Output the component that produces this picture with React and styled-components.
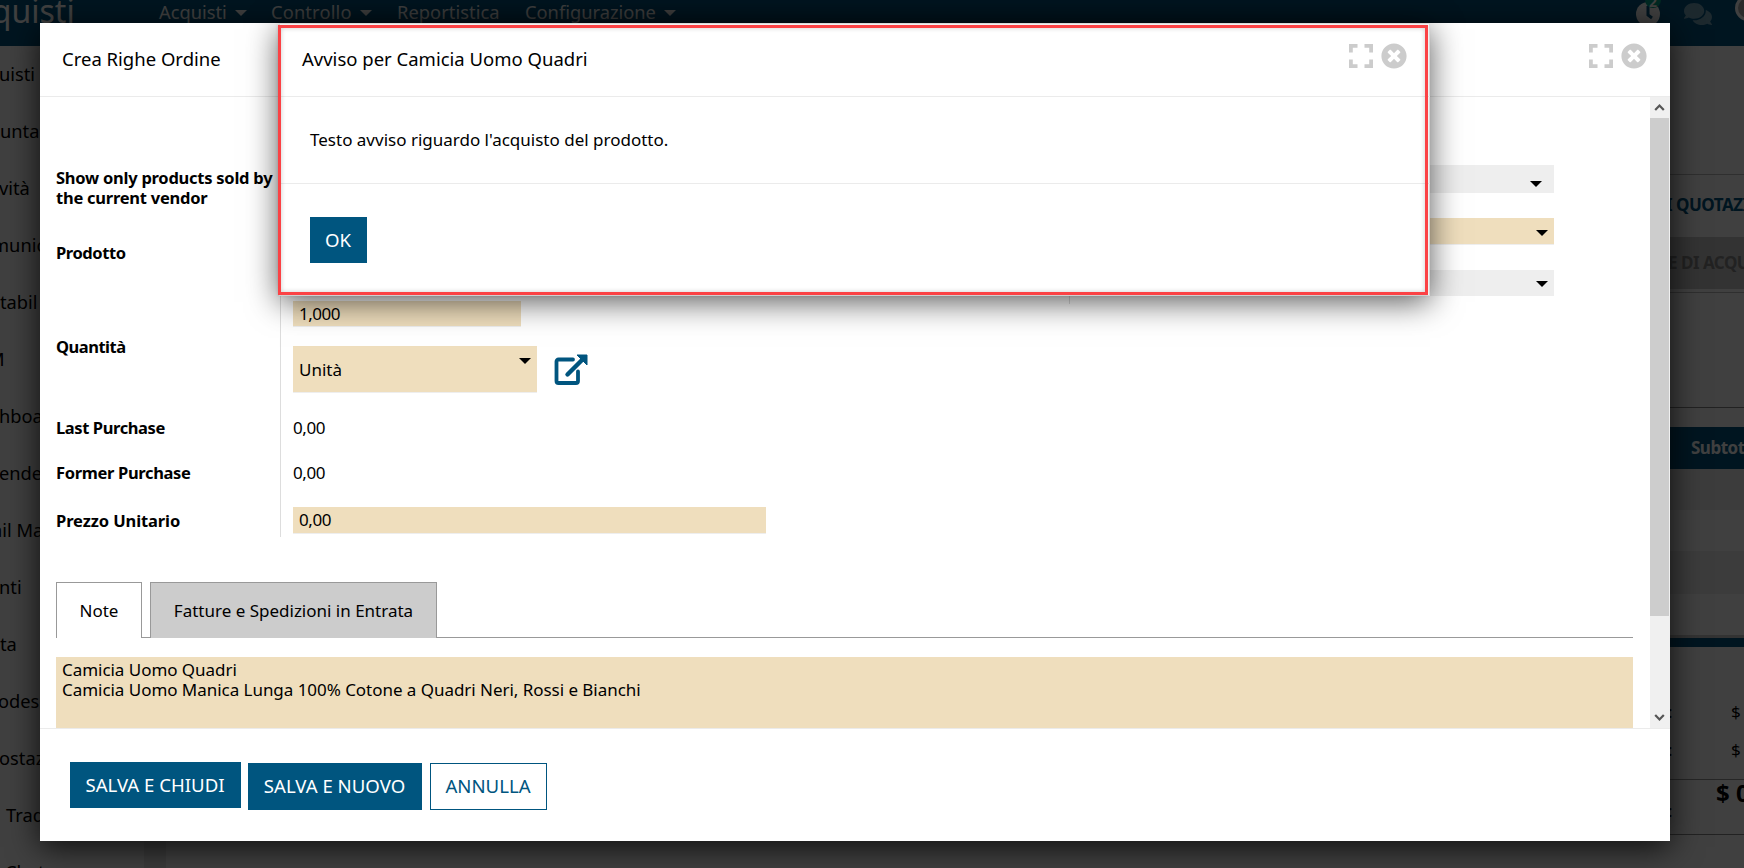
import React from 'react';
import styled, { createGlobalStyle, css } from 'styled-components';
import { FaComments, FaTimesCircle } from 'react-icons/fa';

const BLUE = '#00557f';
const SAND = '#efdebd';

const GlobalStyle = createGlobalStyle`
  *, *::before, *::after { box-sizing: border-box; }
  body {
    margin: 0;
    background: #fff;
    color: #000;
    font-family: "Noto Sans", "Open Sans", sans-serif;
    font-size: 17px;
    line-height: 20px;
  }
`;

const Screen = styled.div`
  position: relative;
  width: 1744px;
  height: 868px;
  overflow: hidden;
  white-space: nowrap;
`;

/* ---------- page behind the dialogs ---------- */

const TopBar = styled.header`
  display: flex;
  height: 46px;
  background: ${BLUE};
  color: #fff;
  font-size: 18.3px;
  line-height: 24px;
`;

const Brand = styled.div`
  width: 166px;
  margin-left: -7px;
  flex: none;
  font-size: 32px;
  line-height: 40px;
  margin-top: -9px;
  text-indent: -37px;
`;

const Menu = styled.nav`
  display: flex;
  flex: 1;
`;

const MenuItem = styled.span`
  display: flex;
  align-items: flex-start;
  width: ${(p) => p.$width}px;
  letter-spacing: ${(p) => p.$ls || 0}px;
`;

const Caret = styled.span`
  flex: none;
  width: 0;
  height: 0;
  border: 6px solid transparent;
  border-top-color: currentColor;
  border-bottom: 0;
`;

const MenuCaret = styled(Caret)`
  margin: 10px 0 0 8px;
`;

const Tray = styled.div`
  display: flex;
  width: 108px;
  flex: none;
`;

const ClockHolder = styled.div`
  position: relative;
  width: 24px;
  margin: 2px 24px 0 0;
  svg { display: block; }
`;

const Badge = styled.span`
  position: absolute;
  left: 9px;
  top: -11px;
  width: 16px;
  height: 17px;
  border-radius: 8px;
  background: #00a287;
  font-size: 14px;
  font-weight: 700;
  line-height: 22px;
  text-align: center;
`;

const Chat = styled(FaComments)`
  flex: none;
  width: 28px;
  height: 26px;
  margin: 1px 23px 0 0;
  opacity: 0.45;
`;

const Avatar = styled.span`
  flex: none;
  width: 26px;
  height: 26px;
  margin-top: -5px;
  border: 3px solid #fff;
  border-radius: 50%;
  background: #aaa;
`;

const Page = styled.div`
  display: flex;
  height: 822px;
`;

const SideBar = styled.aside`
  width: 144px;
  padding-top: 16px;
  font-size: 18.3px;
`;

const SideItem = styled.div`
  height: 57px;
  line-height: 24px;
  text-indent: ${(p) => p.$x}px;
`;

const Gutter = styled.div`
  width: 22px;
  background: #eaeaea;
`;

const Record = styled.main`
  flex: 1;
  display: flex;
  flex-direction: column;
  align-items: flex-end;
`;

const RecordRow = styled.div`
  display: flex;
  align-items: flex-start;
  width: 84px;
  flex: none;
  height: ${(p) => p.$h}px;
  padding-top: ${(p) => p.$top || 0}px;
  padding-left: ${(p) => p.$left || 0}px;
  background: ${(p) => p.$bg || 'transparent'};
  color: ${(p) => p.$color || '#000'};
  border-bottom: ${(p) => (p.$line ? `1px solid ${p.$line}` : '0')};
  font-weight: ${(p) => (p.$bold ? 700 : 400)};
  letter-spacing: ${(p) => (p.$bold ? -0.5 : 0)}px;
`;

const Amount = styled.span`
  margin-left: auto;
  width: ${(p) => p.$width}px;
  font-size: ${(p) => (p.$total ? 24 : 17)}px;
  font-weight: ${(p) => (p.$total ? 700 : 400)};
`;

const TotalColon = styled.span`
  margin-top: 18px;
`;

const Backdrop = styled.div`
  position: absolute;
  inset: 0;
  background: rgba(0, 0, 0, 0.75);
`;

/* ---------- dialogs ---------- */

const dialogBox = css`
  position: absolute;
  display: flex;
  flex-direction: column;
  background: #fff;
`;

const OrderDialog = styled.section`
  ${dialogBox}
  left: 40px;
  top: 23px;
  width: 1630px;
  height: 818px;
  box-shadow: 0 6px 30px rgba(0, 0, 0, 0.8);
`;

const AlertDialog = styled.section`
  ${dialogBox}
  left: 279px;
  top: 23px;
  width: 1151px;
  height: 273px;
  box-shadow: 0 6px 30px rgba(0, 0, 0, 0.65), inset 0 0 0 1px #ddd;

  &::after {
    content: '';
    position: absolute;
    left: -1px;
    top: 2px;
    width: 1150px;
    height: 270px;
    border: 3px solid #fb4245;
    box-shadow: inset 0 0 5px rgba(0, 0, 0, 0.2), 0 0 3px rgba(0, 0, 0, 0.15);
  }
`;

const DialogHeader = styled.header`
  display: flex;
  flex: none;
  height: 74px;
  padding: 20px 23px 0 ${(p) => p.$left}px;
  border-bottom: 1px solid #ebebeb;
  color: #ccc;
`;

const DialogTitle = styled.h1`
  flex: 1;
  margin: 4px 0 0;
  color: #000;
  font-size: 18.5px;
  font-weight: 400;
  line-height: 24px;
`;

const CloseIcon = styled(FaTimesCircle)`
  width: 26px;
  height: 26px;
  margin-left: 8px;
`;

const ExpandSvg = styled.svg`
  width: 24px;
  height: 24px;
  margin-top: 1px;
`;

const DialogMain = styled.div`
  display: flex;
  flex: none;
  height: 631px;
`;

const Scrolled = styled.div`
  width: 1593px;
  flex: none;
  height: 631px;
  padding: 60px 0 0 16px;
  overflow: hidden;
`;

const ScrollTrack = styled.div`
  width: 20px;
  margin-left: auto;
  padding-right: 1px;
  display: flex;
  flex-direction: column;
  background: #f0f0f0;
`;

const ScrollThumb = styled.div`
  height: 498px;
  margin-bottom: auto;
  background: #cdcdcd;
`;

const ScrollArrow = styled.svg`
  width: 19px;
  height: 21px;
  flex: none;
`;

const FormColumns = styled.div`
  display: flex;
  align-items: flex-start;
  height: 380px;
`;

const FormColumn = styled.div`
  width: 1013px;
  flex: none;
`;

const FieldRow = styled.div`
  display: flex;
  height: ${(p) => p.$h}px;
`;

const FieldLabel = styled.label`
  display: flex;
  align-items: center;
  width: 224px;
  flex: none;
  padding-top: ${(p) => p.$top || 0}px;
  font-size: 16.5px;
  font-weight: 700;
  letter-spacing: ${(p) => (p.$ls === undefined ? -0.25 : p.$ls)}px;
`;

const FieldCell = styled.div`
  display: flex;
  flex-direction: column;
  justify-content: ${(p) => (p.$stack ? 'flex-start' : 'center')};
  gap: 19px;
  padding: ${(p) => p.$top || 0}px 0 0 12px;
  border-left: 1px solid #ddd;
`;

const Value = styled.span`
  letter-spacing: -0.4px;
`;

const Field = styled.div`
  display: flex;
  align-items: center;
  width: ${(p) => p.$w}px;
  height: ${(p) => p.$h}px;
  padding-left: 6px;
  background: ${SAND};
  border-bottom: 1px solid #eee;
  letter-spacing: ${(p) => p.$ls || 0}px;
`;

const UnitLine = styled.div`
  display: flex;
`;

const UnitText = styled.span`
  padding-top: 1px;
`;

const UnitCaret = styled(Caret)`
  align-self: flex-start;
  margin: 12px 6px 0 auto;
`;

const LinkIcon = styled.svg`
  width: 34px;
  height: 32px;
  margin: 8px 0 0 17px;
`;

const SelectColumn = styled.div`
  display: flex;
  flex-direction: column;
  flex: none;
  gap: 25px;
  width: 485px;
  height: 147px;
  padding: 8px 0 0 12px;
  border-left: 1px solid #ddd;
`;

const SelectBox = styled.div`
  display: flex;
  flex: none;
  justify-content: flex-end;
  height: ${(p) => p.$h}px;
  padding: ${(p) => p.$top}px ${(p) => p.$right}px 0 0;
  background: ${(p) => (p.$required ? SAND : '#eee')};
  border-bottom: 1px solid #eee;
`;

const Tabs = styled.div`
  display: flex;
  gap: 8px;
  height: 56px;
  margin-top: 45px;
  border-bottom: 1px solid #999;
`;

const Tab = styled.div`
  display: flex;
  align-items: center;
  justify-content: center;
  width: ${(p) => p.$w}px;
  height: 56px;
  background: ${(p) => (p.$active ? '#fff' : '#ccc')};
  border: 1px solid #999;
  border-bottom: 0;
`;

const Notes = styled.div`
  height: 120px;
  margin-top: 19px;
  padding: 3px 6px;
  background: ${SAND};
  letter-spacing: -0.04px;
  white-space: pre-line;
`;

const DialogFooter = styled.footer`
  display: flex;
  flex: 1;
  align-items: flex-start;
  padding: 33px 0 0 30px;
  border-top: 1px solid #ebebeb;
`;

const Button = styled.button`
  width: ${(p) => p.$w}px;
  height: ${(p) => p.$h || 46}px;
  margin: ${(p) => p.$top || 0}px ${(p) => p.$gap || 0}px 0 0;
  padding: 0 1px ${(p) => (p.$h ? 1 : 0)}px 0;
  background: ${(p) => (p.$outline ? '#fff' : BLUE)};
  border: 1px solid ${BLUE};
  color: ${(p) => (p.$outline ? BLUE : '#fff')};
  font: 400 18.6px/24px "Noto Sans", sans-serif;
`;

const Message = styled.p`
  flex: none;
  height: 86px;
  margin: 0;
  padding: 33px 31px 0;
`;

const AlertFooter = styled(DialogFooter)`
  padding-left: 31px;
`;

function Expand() {
  return (
    <ExpandSvg viewBox="0 0 24 24" fill="none" stroke="currentColor" strokeWidth="3.8">
      <path d="M8.5 1.9H1.9v6.6M15.5 1.9h6.6v6.6M8.5 22.1H1.9v-6.6M15.5 22.1h6.6v-6.6" />
    </ExpandSvg>
  );
}

function Clock() {
  return (
    <svg width="24" height="24" viewBox="0 0 24 24">
      <circle cx="12" cy="12" r="12" fill="#fff" />
      <path d="M12 4v9l4 3" fill="none" stroke={BLUE} strokeWidth="3" />
    </svg>
  );
}

const sideItems = [
  ['uisti', -1], ['unta', 0], ['vità', -1], ['munic', -8], ['tabil', 0],
  ['M', -12], ['hboard', -1], ['ender', -1], ['ail Ma', -8], ['nti', -1],
  ['ta', 0], ['odesk', -2], ['ostaz', -1], ['Trad', 6], ['Chat', 5],
];

export default function App() {
  return (
    <Screen>
      <GlobalStyle />
      <TopBar>
        <Brand>Acquisti</Brand>
        <Menu>
          <MenuItem $width={112}>Acquisti<MenuCaret /></MenuItem>
          <MenuItem $width={126} $ls={0.15}>Controllo<MenuCaret /></MenuItem>
          <MenuItem $width={128} $ls={0.05}>Reportistica</MenuItem>
          <MenuItem $width={160}>Configurazione<MenuCaret /></MenuItem>
        </Menu>
        <Tray>
          <ClockHolder><Clock /><Badge>2</Badge></ClockHolder>
          <Chat />
          <Avatar />
        </Tray>
      </TopBar>
      <Page>
        <SideBar>
          {sideItems.map(([text, x]) => (
            <SideItem key={text} $x={x}>{text}</SideItem>
          ))}
        </SideBar>
        <Gutter />
        <Record>
          <RecordRow $h={129} $line="#bbb" />
          <RecordRow $h={62} $top={20} $left={6} $bold $color={BLUE}>I QUOTAZI</RecordRow>
          <RecordRow $h={52} $top={16} $left={8} $bold $bg="#ccc" $color="#888">E DI ACQU</RecordRow>
          <RecordRow $h={4} $line="#bbb" />
          <RecordRow $h={115} $line="#888" />
          <RecordRow $h={19} />
          <RecordRow $h={42} $top={11} $left={31} $bold $bg={BLUE} $color="#fff">Subtot</RecordRow>
          <RecordRow $h={41} $bg="#eee" />
          <RecordRow $h={41} />
          <RecordRow $h={43} $bg="#eee" />
          <RecordRow $h={41} />
          <RecordRow $h={3} $bg="#ccc" />
          <RecordRow $h={9} $bg={BLUE} />
          <RecordRow $h={93} $top={55} $left={8}>:<Amount $width={13}>$</Amount></RecordRow>
          <RecordRow $h={40} $line="#999" $left={8}>:<Amount $width={13}>$</Amount></RecordRow>
          <RecordRow $h={55} $top={3} $line="#888" $left={8}>
            <TotalColon>:</TotalColon>
            <Amount $width={28} $total>$ 0</Amount>
          </RecordRow>
        </Record>
      </Page>

      <Backdrop />

      <OrderDialog>
        <DialogHeader $left={22}>
          <DialogTitle>Crea Righe Ordine</DialogTitle>
          <Expand />
          <CloseIcon />
        </DialogHeader>
        <DialogMain>
          <Scrolled>
            <FormColumns>
              <FormColumn>
                <FieldRow $h={61}>
                  <FieldLabel>Show only products sold by<br />the current vendor</FieldLabel>
                  <FieldCell />
                </FieldRow>
                <FieldRow $h={69}>
                  <FieldLabel $ls={-0.42}>Prodotto</FieldLabel>
                  <FieldCell />
                </FieldRow>
                <FieldRow $h={120}>
                  <FieldLabel $ls={-0.5}>Quantità</FieldLabel>
                  <FieldCell $stack $top={14}>
                    <Field $w={228} $h={26} $ls={-0.5}>1,000</Field>
                    <UnitLine>
                      <Field $w={244} $h={47}><UnitText>Unità</UnitText><UnitCaret /></Field>
                      <LinkIcon viewBox="0 0 34 32" fill="none" stroke={BLUE}>
                        <path d="M19 5.5H4.5a2 2 0 0 0-2 2V27a2 2 0 0 0 2 2H22a2 2 0 0 0 2-2V17.5" strokeWidth="3.8" strokeLinecap="round" />
                        <path d="M13.5 20.5 29 5" strokeWidth="4.4" strokeLinecap="round" />
                        <path d="M23 1h10v10Z" fill={BLUE} strokeWidth="1" strokeLinejoin="round" />
                      </LinkIcon>
                    </UnitLine>
                  </FieldCell>
                </FieldRow>
                <FieldRow $h={41}>
                  <FieldLabel $ls={-0.4}>Last Purchase</FieldLabel>
                  <FieldCell><Value>0,00</Value></FieldCell>
                </FieldRow>
                <FieldRow $h={49}>
                  <FieldLabel $ls={-0.34}>Former Purchase</FieldLabel>
                  <FieldCell><Value>0,00</Value></FieldCell>
                </FieldRow>
                <FieldRow $h={40}>
                  <FieldLabel $top={7} $ls={-0.1}>Prezzo Unitario</FieldLabel>
                  <FieldCell $top={7}><Field $w={473} $h={27} $ls={-0.4}>0,00</Field></FieldCell>
                </FieldRow>
              </FormColumn>
              <SelectColumn>
                <SelectBox $h={28} $top={16} $right={12}><Caret /></SelectBox>
                <SelectBox $h={27} $top={12} $right={6} $required><Caret /></SelectBox>
                <SelectBox $h={26} $top={11} $right={6}><Caret /></SelectBox>
              </SelectColumn>
            </FormColumns>
            <Tabs>
              <Tab $w={86} $active>Note</Tab>
              <Tab $w={287}>Fatture e Spedizioni in Entrata</Tab>
            </Tabs>
            <Notes>
              {'Camicia Uomo Quadri\nCamicia Uomo Manica Lunga 100% Cotone a Quadri Neri, Rossi e Bianchi'}
            </Notes>
          </Scrolled>
          <ScrollTrack>
            <ScrollArrow viewBox="0 0 19 21" fill="none" stroke="#555" strokeWidth="2.2">
              <path d="M5.2 13 9.5 8.5 13.8 13" />
            </ScrollArrow>
            <ScrollThumb />
            <ScrollArrow viewBox="0 0 19 21" fill="none" stroke="#555" strokeWidth="2.2">
              <path d="M5.2 8 9.5 12.5 13.8 8" />
            </ScrollArrow>
          </ScrollTrack>
        </DialogMain>
        <DialogFooter>
          <Button $w={171} $gap={7}>SALVA E CHIUDI</Button>
          <Button $w={174} $h={47} $top={1} $gap={8}>SALVA E NUOVO</Button>
          <Button $w={117} $h={47} $top={1} $outline>ANNULLA</Button>
        </DialogFooter>
      </OrderDialog>

      <AlertDialog>
        <DialogHeader $left={23}>
          <DialogTitle>Avviso per Camicia Uomo Quadri</DialogTitle>
          <Expand />
          <CloseIcon />
        </DialogHeader>
        <Message>Testo avviso riguardo l'acquisto del prodotto.</Message>
        <AlertFooter>
          <Button $w={57}>OK</Button>
        </AlertFooter>
      </AlertDialog>
    </Screen>
  );
}
